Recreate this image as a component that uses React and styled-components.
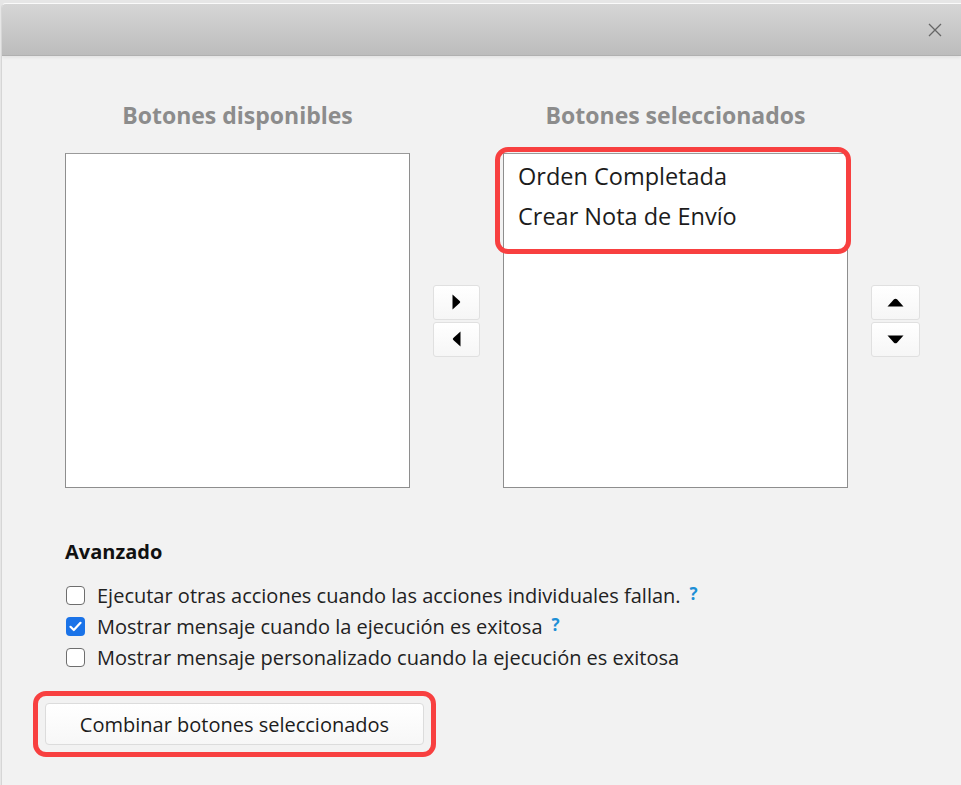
import React from 'react'
import styled, { createGlobalStyle } from 'styled-components'

const GlobalStyle = createGlobalStyle`
  html, body {
    margin: 0;
    padding: 0;
    background: #e6e6e6;
    font-family: "Open Sans", "Liberation Sans", sans-serif;
  }
`

const Window = styled.div`
  display: flex;
  flex-direction: column;
  height: 782px;
  margin: 3px 0 0 1px;
  background: #f2f2f2;
  border-left: 1px solid #d6d6d6;
  border-top: 1px solid #fafafa;
  border-radius: 5px 0 0 0;
  overflow: hidden;
`

const TitleBar = styled.header`
  display: flex;
  align-items: center;
  justify-content: flex-end;
  height: 51px;
  padding-right: 16px;
  background: linear-gradient(#d6d6d6, #bcbcbc);
  border-bottom: 1px solid #b0b0b0;
  box-shadow: 0 2px 3px rgba(0, 0, 0, 0.06);
`

const Close = styled.button`
  display: flex;
  align-items: center;
  justify-content: center;
  width: 20px;
  height: 20px;
  padding: 0;
  border: none;
  background: none;
`

const Body = styled.main`
  display: flex;
  flex-direction: column;
  padding: 45px 0 0 63px;
`

const Lists = styled.section`
  display: grid;
  grid-template-columns: 345px 47px 345px 49px;
  grid-template-rows: 28px 335px;
  column-gap: 23px;
  row-gap: 24px;
  align-items: center;
`

const Heading = styled.h3`
  margin: 0;
  text-align: center;
  font-size: 23px;
  line-height: 28px;
  font-weight: 700;
  color: #8c8c8c;
  grid-column: ${p => p.$col};
`

const ListBox = styled.div`
  position: relative;
  align-self: stretch;
  background: #fff;
  border: 1px solid #8e8e8e;
  border-top-color: #9a9a9a;
  padding: 8px 0;
`

const Item = styled.div`
  padding: 0 14px;
  height: 40px;
  line-height: 28px;
  font-size: 23.5px;
  color: #1c1c1c;
`

const Mark = styled.div`
  position: absolute;
  top: -7px;
  left: -9px;
  width: 346px;
  height: 97px;
  border: 5px solid #f84040;
  border-radius: 13px;
  pointer-events: none;
`

const Arrows = styled.div`
  display: flex;
  flex-direction: column;
  gap: 2px;
`

const ArrowButton = styled.button`
  display: flex;
  align-items: center;
  justify-content: center;
  height: 35px;
  padding: 0;
  background: linear-gradient(#ffffff, #f6f6f6);
  border: 1px solid #e0e0e0;
  border-radius: 3px;
`

const Advanced = styled.section`
  display: flex;
  flex-direction: column;
  margin-top: 52px;
`

const SubTitle = styled.h4`
  margin: 0 0 16px 0;
  font-size: 20px;
  line-height: 24px;
  font-weight: 700;
  color: #111;
`

const CheckRow = styled.label`
  display: flex;
  align-items: center;
  height: 31px;
  font-size: 20px;
  color: #222;
`

const Box = styled.span`
  display: inline-flex;
  align-items: center;
  justify-content: center;
  box-sizing: border-box;
  width: 19px;
  height: 19px;
  margin: 0 12px 0 1px;
  border-radius: 4px;
  border: ${p => (p.$on ? 'none' : '1.5px solid #6e6e6e')};
  background: ${p => (p.$on ? '#1a73e8' : '#fff')};
`

const Help = styled.span`
  margin-left: 9px;
  font-size: 17px;
  font-weight: 700;
  color: #1d8fd6;
  position: relative;
  top: -2px;
`

const Outline = styled.div`
  align-self: flex-start;
  margin: 18px 0 0 -32px;
  padding: 7px;
  border: 5px solid #f84040;
  border-radius: 13px;
`

const ActionButton = styled.button`
  width: 379px;
  height: 42px;
  font-family: inherit;
  font-size: 20px;
  color: #1c1c1c;
  background: linear-gradient(#ffffff, #f7f7f7);
  border: 1px solid #dcdcdc;
  border-radius: 4px;
`

const Tri = ({ dir }) => {
  if (dir === 'up' || dir === 'down') {
    return (
      <svg width="17" height="9" viewBox="0 0 17 9">
        {dir === 'up'
          ? <path d="M0.5 8.5 L7 1.3 Q8.5 0 10 1.3 L16.5 8.5 Z" fill="#000" />
          : <path d="M0.5 0.5 L16.5 0.5 L10 7.7 Q8.5 9 7 7.7 Z" fill="#000" />}
      </svg>
    )
  }
  return (
    <svg width="9" height="16" viewBox="0 0 9 16">
      {dir === 'right'
        ? <path d="M0.5 0.5 L7.7 7 Q8.8 8 7.7 9 L0.5 15.5 Z" fill="#000" />
        : <path d="M8.5 0.5 L1.3 7 Q0.2 8 1.3 9 L8.5 15.5 Z" fill="#000" />}
    </svg>
  )
}

const Check = ({ on, children, help }) => (
  <CheckRow>
    <Box $on={on}>
      {on && (
        <svg width="13" height="11" viewBox="0 0 13 11">
          <path d="M1.5 5.8 L4.8 9 L11.5 1.8" stroke="#fff" strokeWidth="2.2" fill="none" strokeLinecap="round" strokeLinejoin="round" />
        </svg>
      )}
    </Box>
    {children}
    {help && <Help>?</Help>}
  </CheckRow>
)

export default () => (
  <>
    <GlobalStyle />
    <Window>
      <TitleBar>
        <Close>
          <svg width="14" height="14" viewBox="0 0 14 14">
            <path d="M1 1 L13 13 M13 1 L1 13" stroke="#666" strokeWidth="1.3" />
          </svg>
        </Close>
      </TitleBar>
      <Body>
        <Lists>
          <Heading $col="1">Botones disponibles</Heading>
          <Heading $col="3">Botones seleccionados</Heading>
          <ListBox style={{ gridColumn: 1 }} />
          <Arrows>
            <ArrowButton><Tri dir="right" /></ArrowButton>
            <ArrowButton><Tri dir="left" /></ArrowButton>
          </Arrows>
          <ListBox>
            <Item>Orden Completada</Item>
            <Item>Crear Nota de Envío</Item>
            <Mark />
          </ListBox>
          <Arrows>
            <ArrowButton><Tri dir="up" /></ArrowButton>
            <ArrowButton><Tri dir="down" /></ArrowButton>
          </Arrows>
        </Lists>
        <Advanced>
          <SubTitle>Avanzado</SubTitle>
          <Check help>Ejecutar otras acciones cuando las acciones individuales fallan.</Check>
          <Check on help>Mostrar mensaje cuando la ejecución es exitosa</Check>
          <Check>Mostrar mensaje personalizado cuando la ejecución es exitosa</Check>
          <Outline>
            <ActionButton>Combinar botones seleccionados</ActionButton>
          </Outline>
        </Advanced>
      </Body>
    </Window>
  </>
)
